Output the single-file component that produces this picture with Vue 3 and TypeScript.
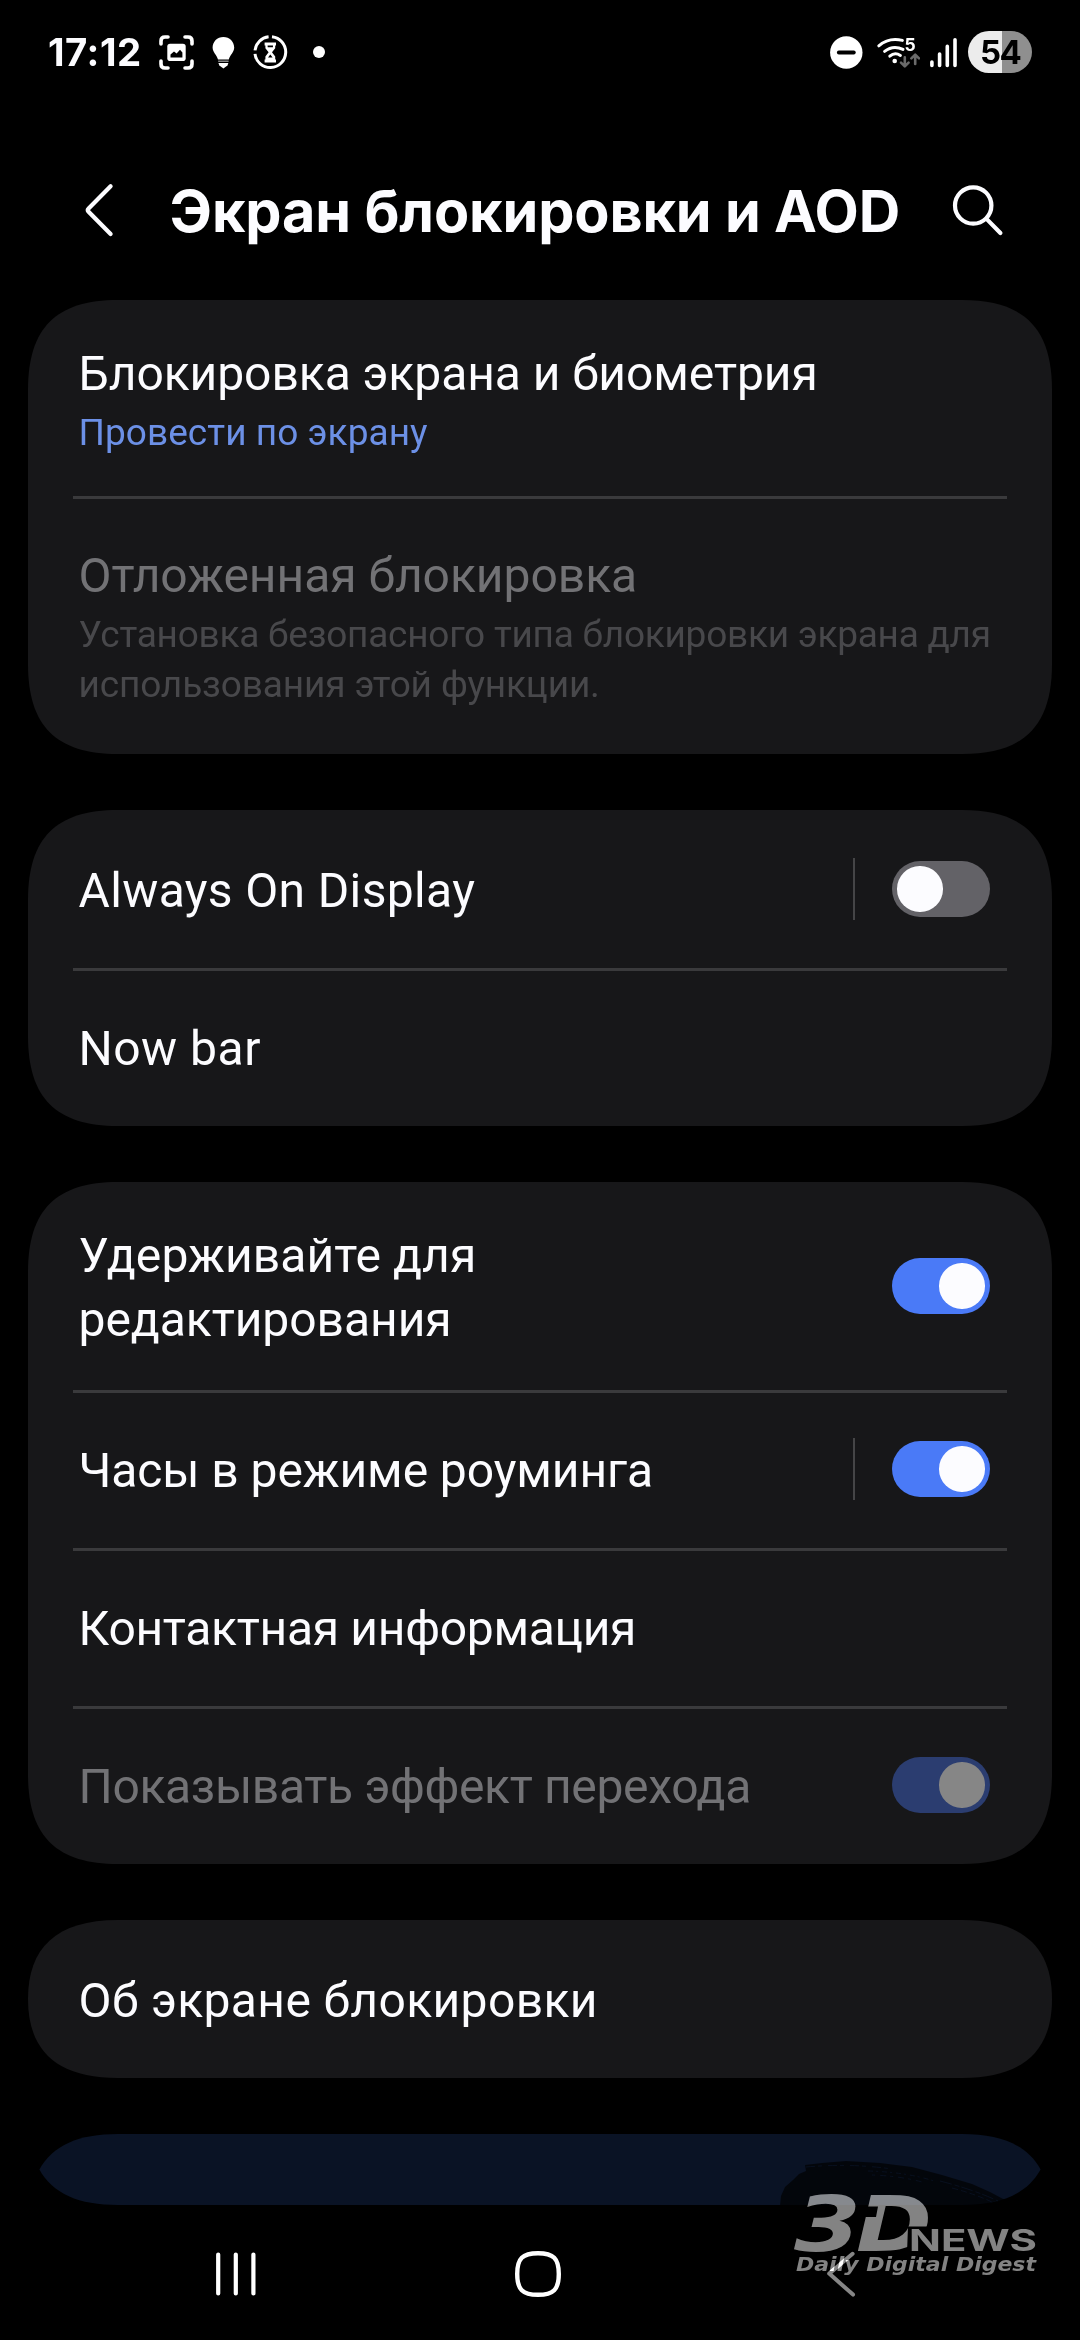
<script setup lang="ts">
interface Line {
  text: string
  spacing: number
}

interface Row {
  id: string
  height: number
  padTop: number
  title: Line[]
  sub?: Line[]
  subAccent?: boolean
  disabled?: boolean
  toggle?: 'on' | 'off'
  separator?: boolean
}

const CARD_WIDTH = 1024

const cards: Row[][] = [
  [
    {
      id: 'lock',
      height: 196,
      padTop: 42,
      title: [{ text: 'Блокировка экрана и биометрия', spacing: -0.06 }],
      sub: [{ text: 'Провести по экрану', spacing: 0.06 }],
      subAccent: true,
    },
    {
      id: 'delayed',
      height: 258,
      padTop: 48,
      title: [{ text: 'Отложенная блокировка', spacing: -0.04 }],
      sub: [
        { text: 'Установка безопасного типа блокировки экрана для', spacing: -0.24 },
        { text: 'использования этой функции.', spacing: -0.13 },
      ],
      disabled: true,
    },
  ],
  [
    {
      id: 'aod',
      height: 158,
      padTop: 49,
      title: [{ text: 'Always On Display', spacing: 0.36 }],
      toggle: 'off',
      separator: true,
    },
    { id: 'nowbar', height: 158, padTop: 49, title: [{ text: 'Now bar', spacing: 0.5 }] },
  ],
  [
    {
      id: 'hold',
      height: 208,
      padTop: 42,
      title: [
        { text: 'Удерживайте для', spacing: 0.08 },
        { text: 'редактирования', spacing: -0.05 },
      ],
      toggle: 'on',
    },
    {
      id: 'roaming',
      height: 158,
      padTop: 49,
      title: [{ text: 'Часы в режиме роуминга', spacing: -0.08 }],
      toggle: 'on',
      separator: true,
    },
    { id: 'contact', height: 158, padTop: 49, title: [{ text: 'Контактная информация', spacing: -0.3 }] },
    {
      id: 'effect',
      height: 158,
      padTop: 49,
      title: [{ text: 'Показывать эффект перехода', spacing: -0.33 }],
      toggle: 'on',
      disabled: true,
    },
  ],
  [{ id: 'about', height: 158, padTop: 49, title: [{ text: 'Об экране блокировки', spacing: 0.36 }] }],
]

// Smooth ("squircle") corners: each corner eases 90px along both edges.
function cardClip(rows: Row[]): string {
  const w = CARD_WIDTH
  const h = rows.reduce((sum, r) => sum + r.height, 0)
  const v = Math.min(90, h / 2)
  return (
    `path("M0 ${v}C0 28 28 0 90 0H${w - 90}C${w - 28} 0 ${w} 28 ${w} ${v}V${h - v}` +
    `C${w} ${h - 28} ${w - 28} ${h} ${w - 90} ${h}H90C28 ${h} 0 ${h - 28} 0 ${h - v}Z")`
  )
}
</script>

<template>
  <div class="screen">
    <div class="status">
      <span class="time">17:12</span>
      <svg class="s-shot" width="40" height="40" viewBox="157 32 40 40">
        <g fill="none" stroke="#fff" stroke-width="3.6" stroke-linecap="round">
          <path d="M161 44V41Q161 37 165 37H168" />
          <path d="M185 37H188Q192 37 192 41V44" />
          <path d="M192 61V64Q192 68 188 68H185" />
          <path d="M168 68H165Q161 68 161 64V61" />
        </g>
        <rect x="167.3" y="43.8" width="18.4" height="17.2" rx="2.8" fill="#fff" />
        <path d="M170.5 57.6V54.4L174 51.6L176.6 53.4L180 49.8L182.4 52.4V57.6Z" fill="#000" />
      </svg>
      <svg class="s-bulb" width="32" height="40" viewBox="207 32 32 40">
        <path
          d="M223.4 37C217.2 37 212.6 41.7 212.6 47.6C212.6 52.4 217 55.4 218 59.6H228.8C229.8 55.4 234.2 52.4 234.2 47.6C234.2 41.7 229.6 37 223.4 37Z"
          fill="#fff"
        />
        <path d="M218.2 60.6H228.6V61.8H218.2Z" fill="#aaa" />
        <path d="M218.4 63H228.4L227.4 65.4L223.4 68.4L219.4 65.4Z" fill="#fff" />
      </svg>
      <svg class="s-timer" width="38" height="40" viewBox="251 32 38 40">
        <path
          d="M272 36.8A15.4 15.4 0 1 1 255 53.8M255 50.4A15.4 15.4 0 0 1 268.6 36.8"
          fill="none"
          stroke="#fff"
          stroke-width="3"
        />
        <path
          d="M264.6 42.4H276V45.6H275.2V48.2L272 52.3L275.2 56.4V59.6H276V62.6H264.6V59.6H265.4V56.4L268.6 52.3L265.4 48.2V45.6H264.6Z"
          fill="#fff"
        />
        <path d="M267.6 45.4H273L272.9 47.2H267.7ZM270.3 54.4L272.6 57.6H268Z" fill="#000" />
      </svg>
      <span class="s-dot"></span>

      <span class="spacer"></span>

      <svg class="s-dnd" width="35" height="35" viewBox="829 34.5 35 35">
        <circle cx="846.3" cy="52" r="16.2" fill="#fff" />
        <path d="M838.8 52H853.8" stroke="#000" stroke-width="3.8" stroke-linecap="round" />
      </svg>
      <svg class="s-wifi" width="44" height="36" viewBox="876 34 44 36">
        <g fill="none" stroke="#fff" stroke-width="3" stroke-linecap="round">
          <path d="M878.8 45.8Q889 37 902.4 40.4" />
          <path d="M884.6 51.4Q893 44.6 903 49.4" />
          <path d="M889.8 56.2Q894.8 51.6 900.4 55.4" />
        </g>
        <circle cx="894.7" cy="61" r="2.3" fill="#fff" />
        <text x="904.4" y="51" class="wifi-gen">5</text>
        <g fill="none" stroke="#6a6a6a" stroke-width="2.6" stroke-linecap="round" stroke-linejoin="round">
          <path d="M904.8 57.4V66M901 62.6L904.8 66.4L908.6 62.6" />
          <path d="M915.2 64V55M911.4 58.4L915.2 54.6L919 58.4" />
        </g>
      </svg>
      <svg class="s-signal" width="31" height="34" viewBox="928 34 31 34">
        <g stroke="#fff" stroke-width="3.6" stroke-linecap="round">
          <path d="M931.9 61V64.4M939.6 53V64.4M947.3 45.4V64.4M955 38.8V64.4" />
        </g>
      </svg>
      <span class="battery">54</span>
    </div>

    <header class="header">
      <svg class="h-back" width="32" height="56" viewBox="84 182 32 56">
        <path
          d="M110.6 186.2L88.6 208.4Q87 210 88.6 211.8L110.6 234"
          fill="none"
          stroke="#fcfcff"
          stroke-width="4.2"
          stroke-linecap="round"
        />
      </svg>
      <h1>Экран блокировки и AOD</h1>
      <svg class="h-search" width="54" height="56" viewBox="950 182 54 56">
        <g fill="none" stroke="#fcfcff" stroke-width="4.2" stroke-linecap="round">
          <circle cx="973.2" cy="205.5" r="18.2" />
          <path d="M987 219.4L1000.4 233" />
        </g>
      </svg>
    </header>

    <main class="list">
      <section v-for="(rows, i) in cards" :key="i" class="card" :style="{ clipPath: cardClip(rows) }">
        <div
          v-for="row in rows"
          :key="row.id"
          class="row"
          :class="{ disabled: row.disabled }"
          :style="{ height: row.height + 'px' }"
        >
          <div class="texts" :style="{ paddingTop: row.padTop + 'px' }">
            <div v-for="l in row.title" :key="l.text" class="title" :style="{ letterSpacing: l.spacing + 'px' }">
              {{ l.text }}
            </div>
            <div v-if="row.sub" class="subs" :class="{ accent: row.subAccent }">
              <div v-for="l in row.sub" :key="l.text" :style="{ letterSpacing: l.spacing + 'px' }">{{ l.text }}</div>
            </div>
          </div>
          <span v-if="row.separator" class="vline"></span>
          <span v-if="row.toggle" class="toggle" :class="row.toggle"><span class="knob"></span></span>
        </div>
      </section>
      <section class="tip"></section>
    </main>

    <nav class="nav">
      <svg width="44" height="50" viewBox="214 2249 44 50">
        <path
          d="M218.2 2254.6V2293.4M235.8 2254.6V2293.4M253.4 2254.6V2293.4"
          stroke="#fff"
          stroke-width="4.2"
          stroke-linecap="round"
        />
      </svg>
      <svg class="n-home" width="50" height="50" viewBox="513 2249 50 50">
        <path
          d="M538 2253.2C553.5 2253.2 558.8 2258.5 558.8 2274C558.8 2289.5 553.5 2294.8 538 2294.8C522.5 2294.8 517.2 2289.5 517.2 2274C517.2 2258.5 522.5 2253.2 538 2253.2Z"
          fill="none"
          stroke="#fff"
          stroke-width="4.4"
        />
      </svg>
      <svg class="n-back" width="34" height="50" viewBox="824 2249 34 50">
        <path
          d="M852.6 2253.8L829.2 2273.6L853 2294.6"
          fill="none"
          stroke="#868686"
          stroke-width="4"
          stroke-linecap="round"
          stroke-linejoin="round"
        />
      </svg>
    </nav>

    <svg class="watermark" width="300" height="190" viewBox="770 2150 300 190">
      <path
        d="M780 2206L781 2196L785 2187L793 2180L799 2174L806 2171L805 2165L822 2163L846 2161L880 2163L912 2167L942 2175L972 2184L990 2192L1005 2200L992 2202L984 2206Z"
        fill="#000"
        fill-opacity="0.68"
      />
      <g fill="none" stroke="#0a1325" stroke-opacity="0.75" stroke-width="1">
        <path d="M806 2167Q850 2163 892 2169" stroke-dasharray="9 3 4 6" />
        <path d="M868 2171Q906 2172 934 2181" stroke-dasharray="5 3 2 4" />
        <path d="M872 2175Q900 2176 922 2182" stroke-dasharray="3 5 6 4" />
        <path d="M940 2181Q975 2190 998 2201" stroke-dasharray="12 3 5 2" />
        <path d="M952 2188Q975 2194 992 2202" stroke-dasharray="6 3" />
      </g>
      <g class="mark">
        <text class="big" x="794" y="2251" textLength="67" lengthAdjust="spacingAndGlyphs">3</text>
        <text class="big" x="856" y="2251" textLength="76" lengthAdjust="spacingAndGlyphs">D</text>
        <path d="M856 2206.500H878L876 2217H854ZM908 2226.500H940V2253H907Z" fill="#000" />
        <text class="news" x="909" y="2251.300" textLength="128" lengthAdjust="spacingAndGlyphs">NEWS</text>
        <text class="digest" x="796" y="2271.200" textLength="240" lengthAdjust="spacingAndGlyphs">Daily Digital Digest</text>
      </g>
    </svg>
  </div>
</template>

<style>
html,
body {
  margin: 0;
  background: #000;
}
</style>

<style scoped>
.screen {
  position: relative;
  width: 1080px;
  height: 2340px;
  overflow: hidden;
  background: #000;
  color: #fcfcff;
  font-family: Roboto, 'Noto Sans', sans-serif;
  display: flex;
  flex-direction: column;
}
svg {
  display: block;
  flex: none;
}

.status {
  height: 104px;
  padding: 0 48px;
  box-sizing: border-box;
  display: flex;
  align-items: center;
  flex: none;
}
.time {
  width: 100px;
  font: 700 38.4px/60px Inter, sans-serif;
  letter-spacing: 0.5px;
  white-space: nowrap;
}
.s-shot {
  margin-left: 9px;
}
.s-bulb {
  margin-left: 10px;
}
.s-timer {
  margin-left: 12px;
}
.s-dot {
  width: 12px;
  height: 12px;
  margin-left: 24px;
  border-radius: 50%;
  background: #fff;
}
.spacer {
  flex: 1;
}
.s-wifi {
  margin-left: 12px;
}
.wifi-gen {
  font: 700 17.5px Inter, sans-serif;
  fill: #fff;
}
.s-signal {
  margin-left: 8px;
}
.battery {
  width: 64px;
  height: 42px;
  margin-left: 9px;
  border-radius: 21px;
  background: linear-gradient(90deg, #ececec 34px, #8f8f8f 34px);
  color: #000;
  font: 700 33px/42px Inter, sans-serif;
  letter-spacing: -1.6px;
  text-align: center;
}

.header {
  height: 196px;
  padding-left: 84px;
  box-sizing: border-box;
  display: flex;
  align-items: flex-start;
  flex: none;
}
.h-back {
  margin-top: 78px;
}
h1 {
  width: 781px;
  margin: 77px 0 0 53.5px;
  font: 700 57.5px/60px Inter, sans-serif;
  letter-spacing: -0.13px;
  white-space: nowrap;
}
.h-search {
  margin-top: 78px;
  margin-left: -0.5px;
}

.list {
  height: 1905px;
  padding: 0 28px;
  display: flex;
  flex-direction: column;
  gap: 56px;
  flex: none;
}
.card {
  background: #171719;
  flex: none;
}
.row {
  display: flex;
  align-items: center;
  padding: 0 62px 0 50.5px;
  box-sizing: border-box;
}
.row + .row {
  background: linear-gradient(#3a3a3c, #3a3a3c) 45px 0 / 934px 3px no-repeat;
}
.texts {
  flex: 1;
  min-width: 0;
  align-self: flex-start;
  white-space: nowrap;
}
.title {
  font-size: 48px;
  line-height: 64px;
}
.subs {
  margin-top: 2px;
  font-size: 37px;
  line-height: 50px;
}
.accent {
  color: #6c90e6;
}
.disabled .title {
  color: #727275;
}
.disabled .subs {
  color: #48484b;
}
.vline {
  width: 2px;
  height: 62px;
  margin-right: 37px;
  background: #454547;
}
.toggle {
  width: 98px;
  height: 56px;
  padding: 0 5.3px;
  box-sizing: border-box;
  border-radius: 28px;
  display: flex;
  align-items: center;
  flex: none;
}
.toggle.off {
  background: #636267;
}
.toggle.on {
  background: #4a7af7;
  justify-content: flex-end;
}
.knob {
  width: 45.4px;
  height: 45.4px;
  border-radius: 50%;
  background: #fcfcff;
}
.disabled .toggle {
  background: #2b3d70;
}
.disabled .knob {
  background: #868686;
}
.tip {
  height: 71px;
  flex: none;
  background: #0a1325;
  clip-path: path('M11.4 35.5C24.8 11.3 50.5 0 90 0H934C973.5 0 999.2 11.3 1012.6 35.5C999.2 59.7 973.5 71 934 71H90C50.5 71 24.8 59.7 11.4 35.5Z');
}

.nav {
  height: 135px;
  padding: 44px 0 0 214px;
  box-sizing: border-box;
  display: flex;
  align-items: flex-start;
  flex: none;
}
.n-home {
  margin-left: 255px;
}
.n-back {
  margin-left: 261px;
}

.watermark {
  position: absolute;
  left: 770px;
  top: 2150px;
}
.mark {
  fill: #838383;
  mix-blend-mode: plus-lighter;
}
.big {
  font: italic 700 77px 'DejaVu Sans', sans-serif;
}
.news {
  font: 700 29.6px Inter, sans-serif;
}
.digest {
  font: italic 700 20px 'DejaVu Sans', sans-serif;
}
</style>
